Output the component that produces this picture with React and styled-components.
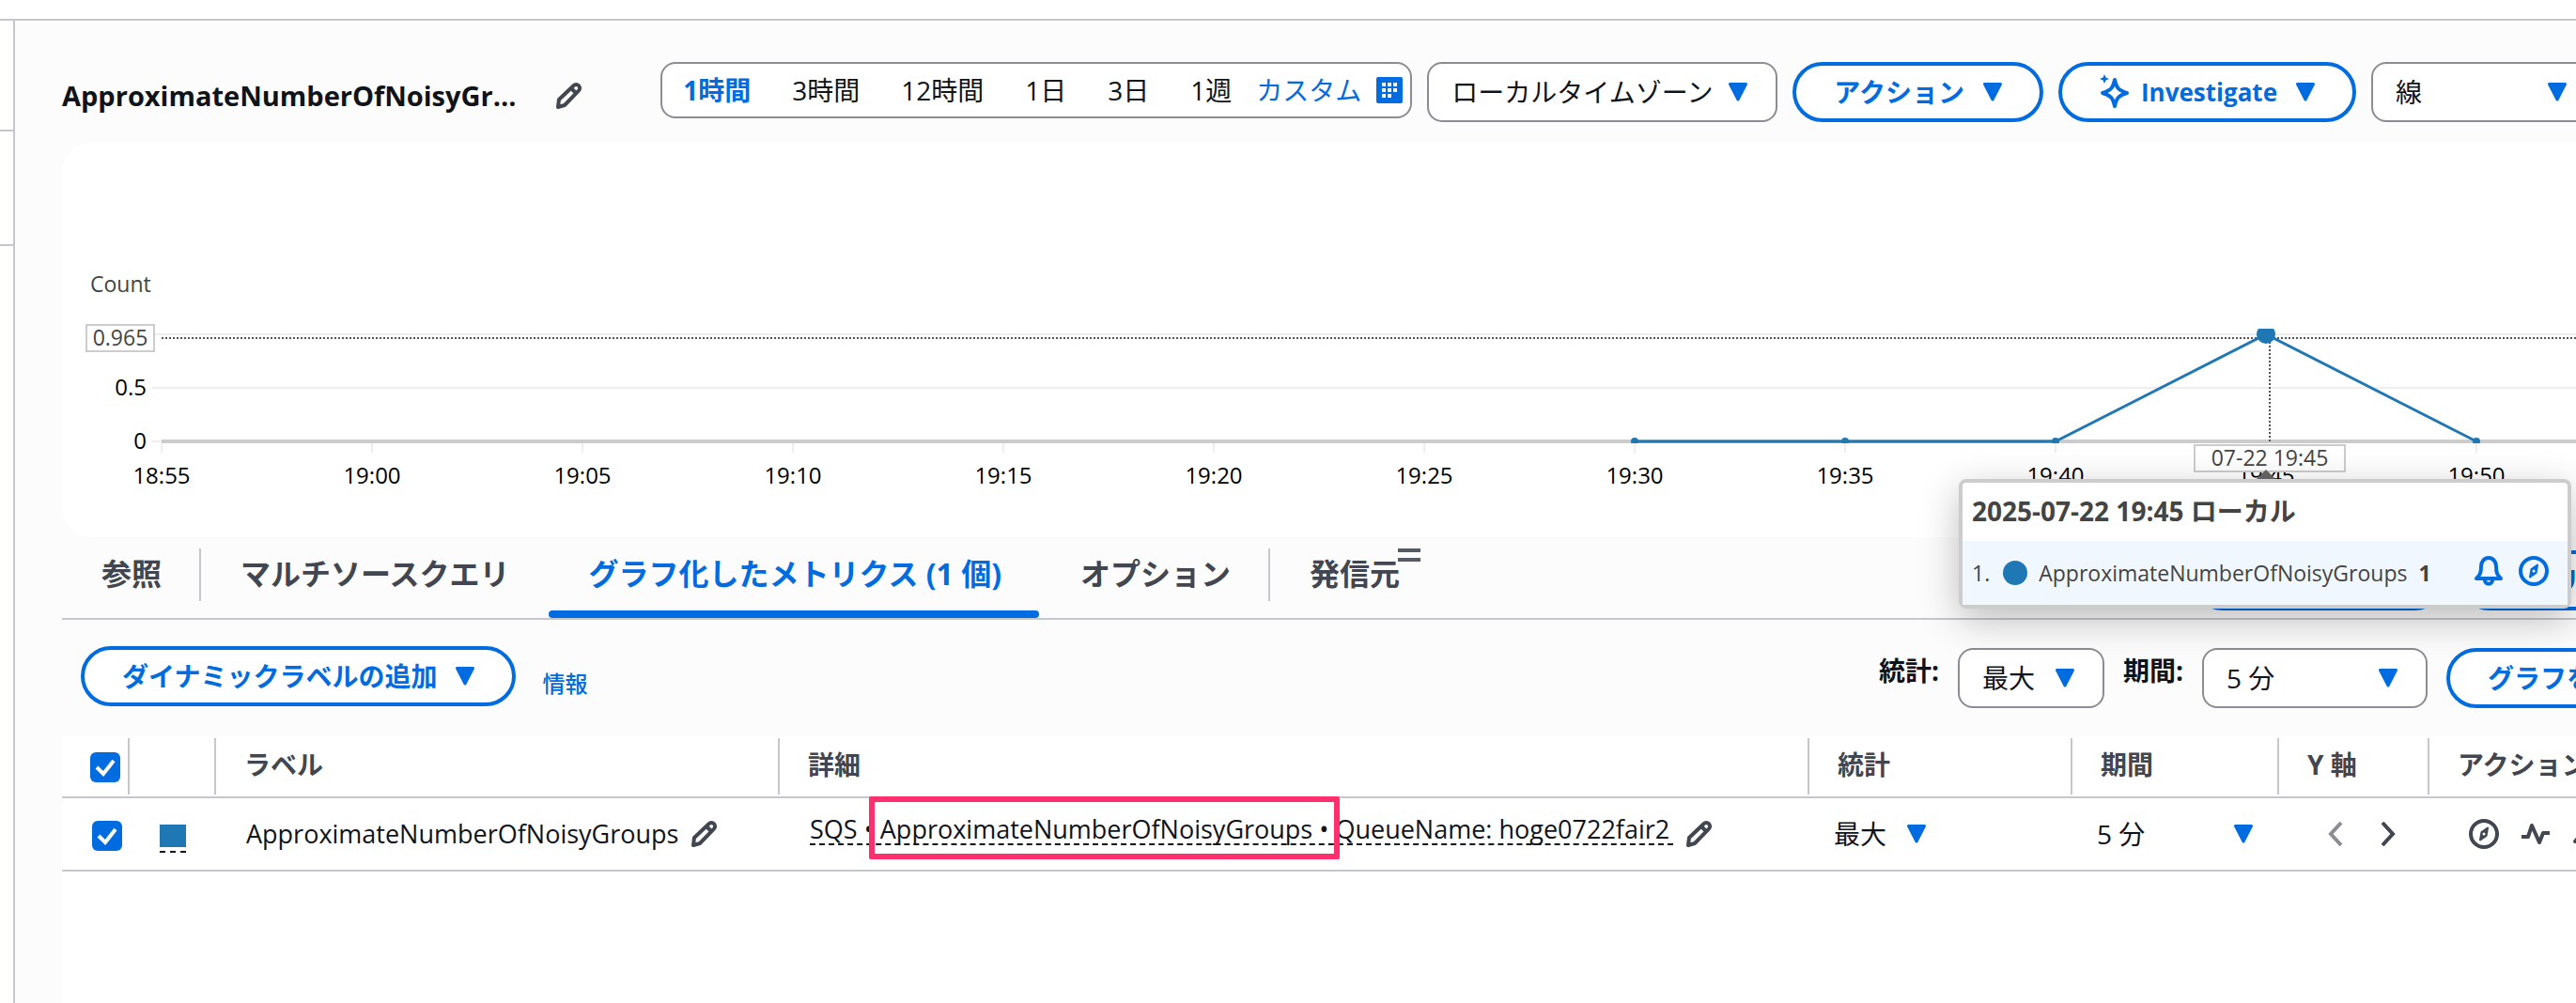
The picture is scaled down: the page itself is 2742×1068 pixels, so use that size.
import React from 'react'
import styled, { createGlobalStyle, css } from 'styled-components'

const GlobalStyle = createGlobalStyle`
  * {
    box-sizing: border-box;
  }
  html, body, #root {
    height: 100%;
  }
  body {
    margin: 0;
    overflow: hidden;
    background: #ffffff;
    color: #0f141a;
    font-family: 'Open Sans', 'Noto Sans CJK JP', sans-serif;
    font-size: 28px;
    line-height: 40px;
  }
  button, select, input {
    font: inherit;
    color: inherit;
    margin: 0;
  }
`

const Page = styled.div`
  display: flex;
  flex-direction: column;
  height: 100%;
  overflow: hidden;
`
const TopBar = styled.header`
  flex: none;
  height: 22px;
  border-bottom: 2px solid #c6c6cd;
`
const Body = styled.div`
  display: flex;
  flex: 1;
  min-height: 0;
`
const SideNav = styled.nav`
  flex: none;
  width: 16px;
  border-right: 2px solid #c6c6cd;
`
const NavSection = styled.div`
  height: ${props => props.$height}px;
  border-bottom: 2px solid #c6c6cd;
`
/* wider than the window, the right end is cut off */
const Main = styled.main`
  display: flex;
  flex: 1;
  flex-direction: column;
  min-width: 0;
  margin-right: -146px;
  padding-left: 50px;
  background: #fcfcfd;
`

/* header */
const Toolbar = styled.div`
  display: flex;
  flex: none;
  align-items: flex-start;
  gap: 16px;
  height: 130px;
  padding: 44px 124px 0 0;
`
const TitleBox = styled.div`
  display: flex;
  flex: 1;
  align-items: center;
  gap: 42px;
  height: 72px;
  min-width: 0;
`
const Title = styled.h1`
  margin: 0;
  font-size: 29px;
  line-height: 40px;
  font-weight: 700;
`
const IconButton = styled.button`
  display: inline-flex;
  flex: none;
  padding: 0;
  border: 0;
  background: none;
  color: ${props => props.$color || '#424650'};
`
const RangeGroup = styled.div`
  display: flex;
  align-items: center;
  gap: 44px;
  height: 60px;
  padding: 0 8px 0 22px;
  border: 2px solid #8c8c94;
  border-radius: 16px;
  background: #ffffff;
`
const RangeButton = styled.button`
  padding: 0;
  border: 0;
  background: none;
  white-space: nowrap;
  color: ${props => (props.$active ? '#006ce0' : '#0f141a')};
  font-weight: ${props => (props.$active ? 700 : 400)};
`
const CustomButton = styled(RangeButton)`
  display: flex;
  align-items: center;
  gap: 16px;
  margin-left: -18px;
  color: #006ce0;
`
const SelectBox = styled.span`
  position: relative;
  display: block;
  flex: none;
  width: ${props => props.$width}px;
  svg {
    position: absolute;
    top: 50%;
    right: 32px;
    margin-top: -10px;
    pointer-events: none;
  }
`
const Select = styled.select`
  display: block;
  appearance: none;
  width: 100%;
  height: 64px;
  padding: 0 24px;
  border: 2px solid #8c8c94;
  border-radius: 16px;
  background: #ffffff;
  ${props => props.$plain && css`
    border-color: transparent;
    background: transparent;
  `}
`
const PillButton = styled.button`
  display: flex;
  flex: none;
  align-items: center;
  gap: 20px;
  height: 64px;
  padding: 0 40px;
  border: 4px solid #006ce0;
  border-radius: 32px;
  background: #ffffff;
  color: #006ce0;
  font-weight: 700;
  white-space: nowrap;
`
const IconLabel = styled.span`
  display: flex;
  align-items: center;
  gap: 12px;
  font-size: 26px;
`

/* chart */
const ChartCard = styled.section`
  position: relative;
  flex: none;
  height: 420px;
  border-radius: 32px;
  background: #ffffff;
`
const Chart = styled.svg`
  display: block;
  width: 100%;
  height: 100%;
  font-size: 24px;
`
const Tooltip = styled.div`
  position: absolute;
  z-index: 2;
  top: 358px;
  left: 2019px;
  width: 652px;
  border: 4px solid #cccccc;
  border-radius: 8px;
  background: #ffffff;
  color: #444444;
  box-shadow: 0 12px 40px rgba(0, 0, 0, 0.25);
`
const TooltipTitle = styled.div`
  height: 62px;
  padding: 10px;
  font-weight: 700;
`
const TooltipRow = styled.div`
  display: flex;
  align-items: center;
  height: 68px;
  padding: 0 20px 0 10px;
  background: #f0f7fe;
  font-size: 23px;
  b {
    margin-left: 12px;
  }
`
const Dot = styled.i`
  width: 26px;
  height: 26px;
  margin: 0 12px 0 14px;
  border-radius: 50%;
  background: #1f77b4;
`
const TooltipActions = styled.div`
  display: flex;
  gap: 16px;
  margin: 0 0 4px auto;
`

/* tabs */
const TabBar = styled.div`
  display: flex;
  flex: none;
  align-items: flex-start;
  height: 88px;
  border-bottom: 2px solid #c6c6cd;
`
const Tab = styled.button`
  position: relative;
  height: 86px;
  padding: 0 42px 8px;
  border: 0;
  background: none;
  color: ${props => (props.$active ? '#006ce0' : '#424650')};
  font-size: 32px;
  font-weight: 700;
  white-space: nowrap;
  & + &::before {
    content: '';
    position: absolute;
    top: 12px;
    left: -2px;
    height: 56px;
    border-left: 2px solid #c6c6cd;
  }
  ${props => props.$active && css`
    &::after {
      content: '';
      position: absolute;
      right: 2px;
      bottom: 0;
      left: 0;
      height: 8px;
      border-radius: 4px;
      background: #006ce0;
    }
  `}
`
const Handle = styled.span`
  position: absolute;
  top: 12px;
  right: 20px;
  width: 24px;
  height: 14px;
  border: solid #545b64;
  border-width: 4px 0;
`
const TabActions = styled.div`
  display: flex;
  gap: 16px;
  margin: 14px 14px 0 auto;
`

/* metric controls */
const Controls = styled.div`
  display: flex;
  flex: none;
  align-items: flex-start;
  gap: 20px;
  height: 124px;
  padding: 30px 0 0;
`
const LabelActions = styled.div`
  display: flex;
  flex: 1;
  align-items: flex-start;
  gap: 28px;
  margin: -2px 0 0 20px;
`
const InfoLink = styled.a`
  margin-top: 20px;
  color: #006ce0;
  font-size: 24px;
  font-weight: 500;
  text-decoration: none;
`
const FieldLabel = styled.label`
  margin-top: 4px;
  font-weight: 700;
  white-space: nowrap;
`

/* metrics table */
const TableArea = styled.div`
  flex: 1;
  background: #ffffff;
`
const Table = styled.table`
  width: 100%;
  table-layout: fixed;
  border-collapse: separate;
  border-spacing: 0;
`
const Th = styled.th`
  position: relative;
  width: ${props => (props.$width ? props.$width + 'px' : 'auto')};
  height: 66px;
  padding: 0 0 4px 30px;
  border-bottom: 2px solid #c6c6cd;
  color: #424650;
  font-weight: 700;
  text-align: left;
  white-space: nowrap;
  &:not(:last-child)::after {
    content: '';
    position: absolute;
    top: 2px;
    right: 0;
    height: 60px;
    border-right: 2px solid #c6c6cd;
  }
`
const Td = styled.td`
  height: 78px;
  padding: 0 0 0 ${props => (props.$pad === undefined ? 32 : props.$pad)}px;
  border-bottom: 2px solid #c6c6cd;
  white-space: nowrap;
`
const CheckBox = styled.span`
  position: relative;
  display: block;
  width: 32px;
  height: 32px;
  margin-top: ${props => props.$top}px;
  svg {
    position: absolute;
    top: 0;
    left: 0;
    pointer-events: none;
  }
`
const CheckInput = styled.input`
  display: block;
  appearance: none;
  width: 32px;
  height: 32px;
  border-radius: 6px;
  background: #006ce0;
`
const Swatch = styled.button`
  display: block;
  width: 28px;
  height: 30px;
  margin-top: 10px;
  padding: 0;
  border: 0;
  border-bottom: 2px dashed #0f141a;
  background: linear-gradient(#1f77b4, #1f77b4) top / 100% 24px no-repeat;
`
const CellLine = styled.div`
  display: flex;
  align-items: center;
  gap: 14px;
  font-size: 27px;
`
const Detail = styled.span`
  height: 34px;
  margin-bottom: 10px;
  padding-right: 4px;
  border-bottom: 2px dashed #0f141a;
  line-height: 34px;
`
const Highlight = styled.span`
  position: relative;
  &::after {
    content: '';
    position: absolute;
    top: -16px;
    right: -12px;
    bottom: -14px;
    left: -12px;
    border: 6px solid #ff2e6c;
    border-radius: 2px;
  }
`
const AxisButtons = styled.div`
  display: flex;
  gap: 40px;
  margin-left: 20px;
`
const RowActions = styled.div`
  display: flex;
  align-items: center;
  gap: 24px;
  margin-left: 10px;
`

const Caret = () => (
  <svg width="20" height="20" viewBox="0 0 20 20" aria-hidden="true">
    <path d="M1.500 1.500h17L10 18z" fill="#006ce0" stroke="#006ce0" strokeWidth="3" strokeLinejoin="round" />
  </svg>
)

const Pencil = () => (
  <svg width="28" height="28" viewBox="0 0 28 28" fill="none" stroke="currentColor" strokeWidth="4" strokeLinejoin="round">
    <path d="M2 26l1-8L18.500 3.200c1.600-1.600 3.800-1.600 5.400 0s1.600 3.800 0 5.400L9 24z" />
    <path d="M16 6l6 6" />
  </svg>
)

const Check = () => (
  <svg width="32" height="32" viewBox="0 0 32 32" fill="none" stroke="#ffffff" strokeWidth="4">
    <path d="M7 16l7 7L25 9" />
  </svg>
)

const Compass = () => (
  <svg width="32" height="32" viewBox="0 0 32 32" fill="none" stroke="currentColor">
    <circle cx="16" cy="16" r="14" strokeWidth="4" />
    <path d="M20 9.500L18.500 18l-6.500 4.500L13.500 14z" fill="currentColor" strokeWidth="2" strokeLinejoin="round" />
    <circle cx="16" cy="16" r="1.500" fill="#ffffff" stroke="none" />
  </svg>
)

const Bell = () => (
  <svg width="32" height="32" viewBox="0 0 32 32" fill="none" stroke="currentColor" strokeWidth="4" strokeLinejoin="round">
    <path d="M3 24c4-4 5-6 5-13a8 9 0 0 1 16 0c0 7 1 9 5 13z" />
    <path d="M12 26c0 5 8 5 8 0" />
  </svg>
)

const Pulse = () => (
  <svg width="30" height="24" viewBox="0 0 30 24" fill="none" stroke="currentColor" strokeWidth="4" strokeLinejoin="round">
    <path d="M0 15h7l4-12 8 18 4-10h7" />
  </svg>
)

const Chevron = ({ left }) => (
  <svg width="16" height="28" viewBox="0 0 16 28" fill="none" stroke="currentColor" strokeWidth="4">
    <path d={left ? 'M14 2L3 14l11 12' : 'M2 2l11 12L2 26'} />
  </svg>
)

const Sparkle = () => (
  <svg width="32" height="38" viewBox="0 0 32 38" fill="none" stroke="#006ce0">
    <path d="M16 6c2 9 4 11 13 14-9 3-11 5-13 14-2-9-4-11-13-14 9-3 11-5 13-14z" strokeWidth="4" strokeLinejoin="round" />
    <path d="M5 0l1.500 3.500L10 5 6.500 6.500 5 10 3.500 6.500 0 5l3.500-1.500z" fill="#006ce0" stroke="none" />
  </svg>
)

const Calendar = () => (
  <svg width="28" height="28" viewBox="0 0 28 28">
    <rect width="28" height="28" rx="2" fill="#006ce0" />
    <g fill="#ffffff">
      <path d="M6 6h4v4H6zM12 6h4v4h-4zM18 6h4v4h-4z" />
      <path d="M6 12h4v4H6zM12 12h4v4h-4zM18 12h4v4h-4z" />
      <path d="M6 18h4v4H6zM12 18h4v4h-4z" />
    </g>
  </svg>
)

const RANGES = ['1時間', '3時間', '12時間', '1日', '3日', '1週']
const TIMES = ['18:55', '19:00', '19:05', '19:10', '19:15', '19:20', '19:25', '19:30', '19:35', '19:40', '19:45', '19:50']
const START = 106
const STEP = 224
const ZERO = 318
const PEAK = 204
const POINTS = [[7, ZERO], [8, ZERO], [9, ZERO], [10, PEAK], [11, ZERO]]
const tickX = i => START + i * STEP

const Dropdown = ({ id, width, value, plain, label }) => (
  <SelectBox $width={width}>
    <Select id={id} $plain={plain} defaultValue={value} aria-label={label}>
      <option>{value}</option>
    </Select>
    <Caret />
  </SelectBox>
)

const MetricChart = () => (
  <Chart>
    <clipPath id="plot">
      <rect x="0" y="198" width="100%" height="122" />
    </clipPath>
    <text x="30" y="159" fill="#444444" fontSize="23">Count</text>
    <path d="M96 204H2822M96 261H2822M96 318H106" stroke="#eeeeee" strokeWidth="2" />
    {TIMES.map((time, i) => (
      <g key={time}>
        <path d={`M${tickX(i)} 320v10`} stroke="#eeeeee" strokeWidth="2" />
        <text x={tickX(i)} y="363" textAnchor="middle">{time}</text>
      </g>
    ))}
    <path d="M106 318H2822" stroke="#cccccc" strokeWidth="4" />
    <text x="90" y="269" textAnchor="end">0.5</text>
    <text x="90" y="326" textAnchor="end">0</text>
    <path d="M106 208H2822M2350 208V318" stroke="#555555" strokeWidth="2" strokeDasharray="2 2" />
    <g clipPath="url(#plot)">
      <polyline
        points={POINTS.map(([i, y]) => `${tickX(i)},${y}`).join(' ')}
        fill="none"
        stroke="#1f77b4"
        strokeWidth="3"
      />
      {POINTS.map(([i, y]) => (
        <circle key={i} cx={tickX(i)} cy={y} r={y === PEAK ? 10 : 4} fill="#1f77b4" />
      ))}
    </g>
    <rect x="26" y="194" width="72" height="28" fill="#ffffff" stroke="#cccccc" strokeWidth="2" />
    <text x="62" y="216" fill="#444444" fontSize="23" textAnchor="middle">0.965</text>
    <rect x="2270" y="322" width="160" height="28" fill="#ffffff" stroke="#cccccc" strokeWidth="2" />
    <text x="2350" y="344" fill="#444444" fontSize="23" textAnchor="middle">07-22 19:45</text>
    <path d="M2346 348l10 10h-20z" fill="#666666" />
  </Chart>
)

const App = () => (
  <Page>
    <GlobalStyle />
    <TopBar />
    <Body>
      <SideNav>
        <NavSection $height={118} />
        <NavSection $height={122} />
      </SideNav>
      <Main>
        <Toolbar>
          <TitleBox>
            <Title>ApproximateNumberOfNoisyGr...</Title>
            <IconButton aria-label="名前を編集"><Pencil /></IconButton>
          </TitleBox>
          <RangeGroup>
            {RANGES.map((range, i) => (
              <RangeButton key={range} $active={i === 0}>{range}</RangeButton>
            ))}
            <CustomButton>カスタム<Calendar /></CustomButton>
          </RangeGroup>
          <Dropdown width={373} value="ローカルタイムゾーン" label="タイムゾーン" />
          <PillButton>アクション<Caret /></PillButton>
          <PillButton>
            <IconLabel><Sparkle />Investigate</IconLabel>
            <Caret />
          </PillButton>
          <Dropdown width={240} value="線" label="グラフの種類" />
        </Toolbar>

        <ChartCard>
          <MetricChart />
          <Tooltip>
            <TooltipTitle>2025-07-22 19:45 ローカル</TooltipTitle>
            <TooltipRow>
              1.<Dot />ApproximateNumberOfNoisyGroups<b>1</b>
              <TooltipActions>
                <IconButton $color="#006ce0" aria-label="アラーム"><Bell /></IconButton>
                <IconButton $color="#006ce0" aria-label="調査"><Compass /></IconButton>
              </TooltipActions>
            </TooltipRow>
          </Tooltip>
        </ChartCard>

        <TabBar>
          <Tab>参照</Tab>
          <Tab>マルチソースクエリ</Tab>
          <Tab $active>グラフ化したメトリクス (1 個)</Tab>
          <Tab>オプション</Tab>
          <Tab>発信元<Handle /></Tab>
          <TabActions>
            <PillButton>数式を追加<Caret /></PillButton>
            <PillButton>クエリを追加</PillButton>
          </TabActions>
        </TabBar>

        <Controls>
          <LabelActions>
            <PillButton>ダイナミックラベルの追加<Caret /></PillButton>
            <InfoLink href="#info">情報</InfoLink>
          </LabelActions>
          <FieldLabel htmlFor="stat">統計:</FieldLabel>
          <Dropdown id="stat" width={156} value="最大" />
          <FieldLabel htmlFor="period">期間:</FieldLabel>
          <Dropdown id="period" width={240} value="5 分" />
          <PillButton>グラフをクリア</PillButton>
        </Controls>

        <TableArea>
          <Table>
            <thead>
              <tr>
                <Th $width={72}>
                  <CheckBox $top={6}><CheckInput type="checkbox" defaultChecked aria-label="すべて選択" /><Check /></CheckBox>
                </Th>
                <Th $width={92} />
                <Th $width={600}>ラベル</Th>
                <Th>詳細</Th>
                <Th $width={280}>統計</Th>
                <Th $width={220}>期間</Th>
                <Th $width={160}>Y 軸</Th>
                <Th $width={302}>アクション</Th>
              </tr>
            </thead>
            <tbody>
              <tr>
                <Td>
                  <CheckBox $top={4}><CheckInput type="checkbox" defaultChecked aria-label="選択" /><Check /></CheckBox>
                </Td>
                <Td><Swatch aria-label="色" /></Td>
                <Td>
                  <CellLine>
                    ApproximateNumberOfNoisyGroups
                    <IconButton aria-label="ラベルを編集"><Pencil /></IconButton>
                  </CellLine>
                </Td>
                <Td>
                  <CellLine>
                    <Detail>
                      SQS • <Highlight>ApproximateNumberOfNoisyGroups •</Highlight> QueueName: hoge0722fair2
                    </Detail>
                    <IconButton aria-label="詳細を編集"><Pencil /></IconButton>
                  </CellLine>
                </Td>
                <Td $pad={0}><Dropdown plain width={156} value="最大" label="統計" /></Td>
                <Td $pad={0}><Dropdown plain width={224} value="5 分" label="期間" /></Td>
                <Td>
                  <AxisButtons>
                    <IconButton $color="#8c8c94" aria-label="左"><Chevron left /></IconButton>
                    <IconButton aria-label="右"><Chevron /></IconButton>
                  </AxisButtons>
                </Td>
                <Td>
                  <RowActions>
                    <IconButton aria-label="調査"><Compass /></IconButton>
                    <IconButton aria-label="異常検出"><Pulse /></IconButton>
                    <IconButton aria-label="アラーム"><Bell /></IconButton>
                  </RowActions>
                </Td>
              </tr>
            </tbody>
          </Table>
        </TableArea>
      </Main>
    </Body>
  </Page>
)

export default App
